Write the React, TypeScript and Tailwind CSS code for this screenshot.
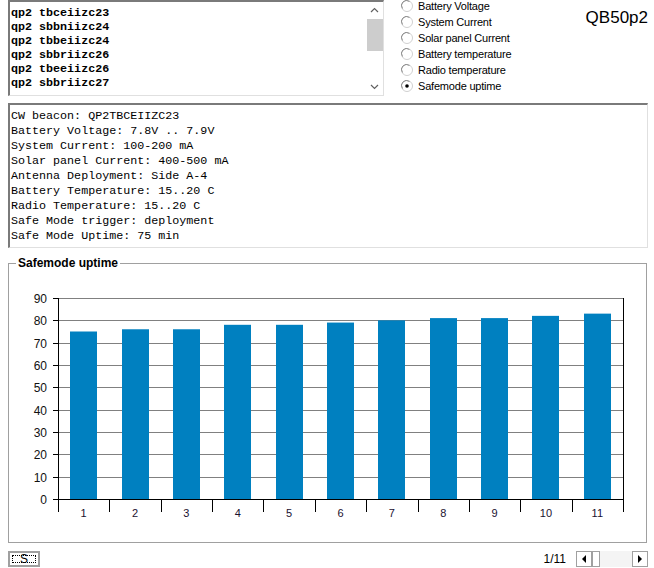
import React from "react";

const packets = [
  "qp2 tbceiizc23",
  "qp2 sbbniizc24",
  "qp2 tbbeiizc24",
  "qp2 sbbriizc26",
  "qp2 tbeeiizc26",
  "qp2 sbbriizc27",
];

const options = [
  "Battery Voltage",
  "System Current",
  "Solar panel Current",
  "Battery temperature",
  "Radio temperature",
  "Safemode uptime",
];

const beacon = [
  "CW beacon: QP2TBCEIIZC23",
  "Battery Voltage: 7.8V .. 7.9V",
  "System Current: 100-200 mA",
  "Solar panel Current: 400-500 mA",
  "Antenna Deployment: Side A-4",
  "Battery Temperature: 15..20 C",
  "Radio Temperature: 15..20 C",
  "Safe Mode trigger: deployment",
  "Safe Mode Uptime: 75 min",
];

const values = [75, 76, 76, 78, 78, 79, 80, 81, 81, 82, 83];

const Radio = ({ checked }: { checked?: boolean }) => (
  <svg width="12" height="12" viewBox="0 0 12 12">
    <circle cx="6" cy="6" r="5.5" fill="#fff" stroke="#d0d0d0" />
    <path d="M1.5 8.5 A5 5 0 0 1 8.5 1.5" fill="none" stroke="#8a8a8a" strokeWidth="1" />
    {checked && <circle cx="6" cy="6" r="1.8" fill="#000" />}
  </svg>
);

// chart in page coordinates (viewBox offset to the group box)
const Chart = () => {
  const left = 57;
  const right = 622;
  const top = 297;
  const bottom = 498;
  const step = (bottom - top) / 9;
  const cat = (right - left) / values.length;
  const y = (v: number) => bottom - (v / 10) * step;
  return (
    <svg
      className="absolute left-0 top-0"
      width="639"
      height="280"
      viewBox="8 263 639 280"
      style={{ fontFamily: '"Liberation Sans", Arial, sans-serif' }}
    >
      {[0, 1, 2, 3, 4, 5, 6, 7, 8, 9].map((i) => {
        const gy = Math.round(bottom - i * step) + 0.5;
        return (
          <g key={i}>
            {i > 0 && <line x1={left} x2={right} y1={gy} y2={gy} stroke="#808080" />}
            <line x1={52} x2={left} y1={gy} y2={gy} stroke="#000" />
            <text x={46} y={gy + 4} fontSize="12" textAnchor="end" fill="#111">
              {i * 10}
            </text>
          </g>
        );
      })}
      {values.map((v, i) => {
        const cx = left + cat * (i + 0.5);
        return (
          <g key={i}>
            <rect x={Math.round(cx - 13.5)} y={y(v)} width={27} height={bottom - y(v)} fill="#0080c0" />
            <text x={cx} y={516} fontSize="11" textAnchor="middle" fill="#1a1030">
              {i + 1}
            </text>
          </g>
        );
      })}
      {values.map((_, i) => (
        <line key={i} x1={Math.round(left + cat * i) + 0.5} x2={Math.round(left + cat * i) + 0.5} y1={bottom} y2={511} stroke="#000" />
      ))}
      <line x1={left + 0.5} x2={left + 0.5} y1={top} y2={511} stroke="#000" />
      <line x1={right + 0.5} x2={right + 0.5} y1={top} y2={511} stroke="#000" />
      <line x1={left} x2={right + 1} y1={bottom + 0.5} y2={bottom + 0.5} stroke="#000" />
    </svg>
  );
};

export default function App() {
  return (
    <div
      className="relative w-[654px] h-[568px] overflow-hidden bg-white text-black"
      style={{ fontFamily: '"Liberation Sans", Arial, sans-serif' }}
    >
      {/* top row */}
      <div className="flex h-[96px]">
        <div className="ml-[8px] w-[376px] h-[96px] flex border-l-2 border-t-2 border-r border-b border-l-[#7a7a7a] border-t-[#7a7a7a] border-r-[#e0e0e0] border-b-[#e0e0e0]">
          <div className="flex-1 pt-[4px] pl-[1px] font-['Liberation_Mono','Courier_New',monospace] font-bold text-[11.7px] leading-[14px]">
            {packets.map((p) => (
              <div key={p} className="whitespace-pre">{p}</div>
            ))}
          </div>
          <div className="w-[17px] flex flex-col items-center text-[#606060]">
            <svg width="17" height="17" viewBox="0 0 17 17">
              <path d="M5 10 L8.5 6.5 L12 10" fill="none" stroke="#606060" strokeWidth="1.2" />
            </svg>
            <div className="w-[16px] h-[32px] bg-[#cdcdcd]" />
            <div className="flex-1" />
            <svg width="17" height="17" viewBox="0 0 17 17">
              <path d="M5 7 L8.5 10.5 L12 7" fill="none" stroke="#606060" strokeWidth="1.2" />
            </svg>
          </div>
        </div>
        <div className="ml-[17px] flex flex-col text-[11px] leading-[16px] tracking-[-0.2px]">
          {options.map((o, i) => (
            <div key={o} className="flex items-center gap-[5px] h-[16px] first:-mt-[2px]">
              <Radio checked={i === options.length - 1} />
              <span>{o}</span>
            </div>
          ))}
        </div>
        <div className="ml-auto mr-[6px] mt-[8px] text-[17px] leading-[20px]">QB50p2</div>
      </div>

      {/* beacon text */}
      <div className="mt-[7px] ml-[8px] w-[640px] h-[145px] border-l-2 border-t-2 border-r border-b border-l-[#7a7a7a] border-t-[#7a7a7a] border-r-[#e0e0e0] border-b-[#e0e0e0] pt-[4px] pl-[1px] font-['Liberation_Mono','Courier_New',monospace] text-[11.7px] leading-[15px]">
        {beacon.map((l) => (
          <div key={l} className="whitespace-pre">{l}</div>
        ))}
      </div>

      {/* group box */}
      <div className="relative mt-[15px] ml-[8px] w-[639px] h-[280px] border border-[#a0a0a0]">
        <div className="absolute left-[7px] -top-[8px] bg-white px-[2px] text-[12px] font-bold leading-[14px]">
          Safemode uptime
        </div>
        <Chart />
      </div>

      {/* bottom row */}
      <div className="flex items-center mt-[8px] h-[16px]">
        <div className="ml-[8px] w-[32px] h-[16px] border-2 border-[#a0a0a0] flex items-center justify-center p-[2px]">
          <div className="w-full h-full border border-dotted border-black flex items-center justify-center text-[12px] leading-none">
            S
          </div>
        </div>
        <div className="ml-auto text-[12px] mr-[10px]">1/11</div>
        <div className="mr-[6px] w-[72px] h-[16px] flex bg-[#f4f4f4]">
          <div className="w-[16px] h-[16px] border border-[#a0a0a0] bg-white flex items-center justify-center">
            <svg width="6" height="8" viewBox="0 0 6 8"><path d="M5 0 L1 4 L5 8 Z" fill="#000" /></svg>
          </div>
          <div className="w-[8px] h-[16px] border border-[#a0a0a0] bg-white" />
          <div className="flex-1" />
          <div className="w-[16px] h-[16px] border border-[#a0a0a0] bg-white flex items-center justify-center">
            <svg width="6" height="8" viewBox="0 0 6 8"><path d="M1 0 L5 4 L1 8 Z" fill="#000" /></svg>
          </div>
        </div>
      </div>
    </div>
  );
}
